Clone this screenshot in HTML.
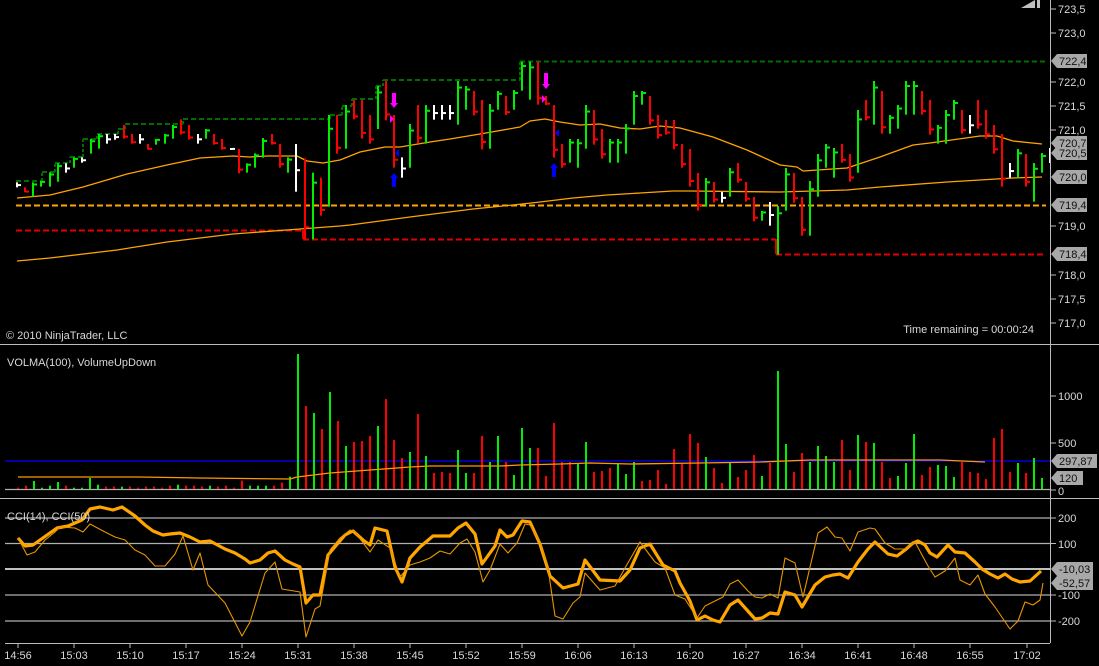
<!DOCTYPE html>
<html><head><meta charset="utf-8"><style>
html,body{margin:0;padding:0;background:#000;width:1099px;height:666px;overflow:hidden}
svg{display:block}
text{font-family:"Liberation Sans",Arial,sans-serif;font-size:11px;fill:#d8d8d8}
.bx{fill:#a8a8a8}
.bt{fill:#111}
</style></head><body>
<svg id="s" width="1099" height="666" viewBox="0 0 1099 666" xmlns="http://www.w3.org/2000/svg">
<rect width="1099" height="666" fill="#000"/>
<g id="g"></g>
<!-- frame -->
<line x1="0" y1="344.5" x2="1099" y2="344.5" stroke="#bbb"/>
<line x1="0" y1="498.5" x2="1099" y2="498.5" stroke="#bbb"/>
<line x1="1050.5" y1="0" x2="1050.5" y2="643" stroke="#bbb"/>
<line x1="5" y1="643.5" x2="1050" y2="643.5" stroke="#bbb"/>
<!-- play icon -->
<polygon points="1021,8 1035,0 1035,8" fill="#c0c0c0"/><rect x="1037" y="0" width="3" height="8" fill="#c0c0c0"/>
<!-- price axis -->
<g id="pax"></g>
<text x="1058" y="13">723,5</text><text x="1058" y="37">723,0</text>
<text x="1058" y="86">722,0</text><text x="1058" y="110">721,5</text>
<text x="1058" y="134">721,0</text><text x="1058" y="230">719,0</text>
<text x="1058" y="279">718,0</text><text x="1058" y="303">717,5</text>
<text x="1058" y="327">717,0</text>
<g id="boxes"></g>
<text x="1059" y="65" class="bt">722,4</text>
<text x="1059" y="147" class="bt">720,7</text>
<text x="1059" y="157" class="bt">720,5</text>
<text x="1059" y="181" class="bt">720,0</text>
<text x="1059" y="209" class="bt">719,4</text>
<text x="1059" y="258" class="bt">718,4</text>
<text x="6" y="339">© 2010 NinjaTrader, LLC</text>
<text x="1034" y="333" text-anchor="end">Time remaining = 00:00:24</text>
<!-- volume -->
<text x="7" y="366">VOLMA(100), VolumeUpDown</text>
<text x="1058" y="400">1000</text><text x="1058" y="447">500</text><text x="1058" y="495">0</text>
<text x="1059" y="465" class="bt">297,87</text>
<text x="1059" y="482" class="bt">120</text>
<!-- cci -->
<text x="7" y="520">CCI(14), CCI(50)</text>
<text x="1058" y="522">200</text><text x="1058" y="548">100</text>
<text x="1058" y="599">-100</text><text x="1058" y="625">-200</text>
<text x="1059" y="573" class="bt">-10,03</text>
<text x="1059" y="587" class="bt">-52,57</text>
<!-- time -->
<g text-anchor="middle">
<text x="18" y="659">14:56</text><text x="74" y="659">15:03</text><text x="130" y="659">15:10</text>
<text x="186" y="659">15:17</text><text x="242" y="659">15:24</text><text x="298" y="659">15:31</text>
<text x="354" y="659">15:38</text><text x="410" y="659">15:45</text><text x="466" y="659">15:52</text>
<text x="522" y="659">15:59</text><text x="578" y="659">16:06</text><text x="634" y="659">16:13</text>
<text x="690" y="659">16:20</text><text x="746" y="659">16:27</text><text x="802" y="659">16:34</text>
<text x="858" y="659">16:41</text><text x="914" y="659">16:48</text><text x="970" y="659">16:55</text>
<text x="1027" y="659">17:02</text>
</g>
</svg>
<script>
var NS="http://www.w3.org/2000/svg",G=document.getElementById('g');
function el(n,a,p){var e=document.createElementNS(NS,n);for(var k in a)e.setAttribute(k,a[k]);(p||G).appendChild(e);return e;}
function line(x1,y1,x2,y2,c,w,d,p){var a={x1:x1,y1:y1,x2:x2,y2:y2,stroke:c,'stroke-width':w||1};if(d)a['stroke-dasharray']=d;return el('line',a,p);}
function poly(pts,c,w){el('polyline',{points:pts.map(function(p){return p.join(',')}).join(' '),fill:'none',stroke:c,'stroke-width':w,'stroke-linejoin':'round'});}
var C={G:'#00ee00',R:'#ff0000',W:'#ffffff'};
// grid lines CCI
[518,543.5,595,621].forEach(function(y){line(5,y,1050,y,'#b0b0b0',1.2);});
line(5,569,1050,569,'#c0c0c0',2);
line(5,489.5,1050,489.5,'#b0b0b0',1.2);
// dashed levels
var gd='#006d00';
var gs=[[16,42,181],[42,55,172],[55,70,163],[70,83,157],[83,97,139],[97,118,134],[118,125,129],[125,183,124],[183,330,119],[330,342,115],[342,352,106],[352,376,99],[376,383,86],[383,520,80],[520,1046,61.5]];
gs.forEach(function(s){line(s[0],s[2],s[1],s[2],gd,2,'5,3');});
for(var i=0;i<gs.length-1;i++)line(gs[i][1],gs[i][2],gs[i][1],gs[i+1][2],gd,2,'3,2');
line(16,205.5,1046,205.5,'#ffa500',2,'6,3');
line(16,230.5,303,230.5,'#e00000',2,'6,3');line(303,230,303,239,'#e00000',2);
line(303,239.5,776,239.5,'#e00000',2,'6,3');line(776,239,776,254,'#e00000',2);
line(776,254.5,1046,254.5,'#e00000',2,'6,3');
// MAs
poly([[17,198],[50,195],[83,187],[100,182],[127,174],[167,165],[200,158],[233,156],[250,157],[267,156],[297,156],[307,161],[323,163],[340,160],[350,156],[360,152],[385,147],[400,147],[430,142],[450,139],[480,134],[520,127],[530,121],[545,119],[560,122],[580,125],[600,124],[620,128],[640,129],[660,126],[680,128],[713,137],[747,150],[780,165],[797,167],[803,171],[847,168],[880,157],[913,145],[930,143],[980,136],[997,136],[1013,141],[1042,144]],'#ffa500',1.3);
poly([[17,261],[50,258],[117,250],[167,242],[233,234],[300,229],[340,226],[350,225],[410,217],[473,209],[513,205],[540,202],[573,198],[607,195],[640,193],[673,191],[690,191],[780,192],[847,190],[880,187],[947,182],[980,180],[1013,178],[1042,177]],'#ffa500',1.3);
// price bars
var bars=[];
var z4=[['W',397,412],['R',412,427],['G',397,440],['G',393,410],['G',367,410],['G',340,395],['W',340,368],['G',322,353],['W',322,338],['G',267,311],['G',252,296],['W',252,281],['W',252,269],['R',225,266],['R',252,281],['W',252,281],['R',282,299],['G',267,284],['G',252,281],['G',225,266],['R',208,254],['R',225,269],['W',252,281],['G',237,266],['R',252,284],['R',267,299],['W',294,299],['R',297,370],['G',340,368],['G',310,353],['G',264,323],['R',252,284],['R',282,353],['G',322,368],['W',282,425],['R',325,568],['G',368,568],['R',383,497],['G',195,470],['R',195,311],['G',165,296]];
z4.forEach(function(b,i){bars.push([(50+24.675*i)/3,b[0],b[1]/3+50,b[2]/3+50]);});
var z5=[['R',150,208],['R',150,266],['R',195,281],['G',108,237],['R',93,211],['R',195,353],['W',322,383],['G',222,353],['R',165,281],['G',165,281],['W',165,209],['W',165,209],['W',165,209],['G',93,224],['G',108,179],['R',123,196],['R',150,298],['G',162,296],['G',123,179],['R',138,195],['G',120,179],['G',35,122],['G',35,149],['R',35,164],['R',138,165],['R',165,323],['R',282,353],['G',267,338],['G',267,353],['G',165,296],['R',180,284],['R',237,326],['G',267,338],['G',267,338],['G',222,311],['G',123,224],['G',123,164],['R',138,224],['R',195,266],['R',210,254],['R',210,298]];
z5.forEach(function(b,i){bars.push([340+(42+24*i)/3,b[0],b[1]/3+50,b[2]/3+50]);});
var z6=[['R',282,353],['R',297,410],['R',369,482],['G',384,470],['R',396,458],['W',426,458],['G',354,440],['R',339,398],['R',396,455],['R',441,514],['G',483,512],['W',456,527],['G',468,614],['G',354,482],['R',369,458],['R',441,557],['G',393,557],['G',312,440],['G',282,353],['G',294,383],['R',282,338],['R',312,395],['G',180,368],['R',150,211],['G',93,224],['R',123,251],['G',195,251],['G',165,236],['G',93,194],['G',93,194],['R',123,194],['R',150,254],['G',225,281],['G',180,281],['G',150,209],['R',180,251],['W',195,251],['R',150,236],['R',180,266],['R',225,311],['R',252,410],['W',339,383],['G',297,383],['R',312,410],['G',339,455],['G',309,368]];
z6.forEach(function(b,i){bars.push([680+(5+24*i)/3,b[0],b[1]/3+50,b[2]/3+50]);});
bars.forEach(function(b){var x=Math.round(b[0]),c=C[b[1]],t=b[2],bo=b[3],h=bo-t;
 el('rect',{x:x-1,y:t,width:2,height:Math.max(h,2),fill:c});
 var ty=b[1]=='G'?t+h*0.15:(b[1]=='R'?t+h*0.85:t+h*0.55);
 el('rect',{x:x+1,y:ty-1,width:3,height:2,fill:c});});
line(1050,148,1050,163,'#fff',2);
// markers
function darr(x,y1,y2,c){el('rect',{x:x-2,y:y1,width:4,height:y2-y1-4,fill:c});el('polygon',{points:(x-4)+','+(y2-5)+' '+(x+4)+','+(y2-5)+' '+x+','+y2,fill:c});}
function uarr(x,y1,y2,c){el('rect',{x:x-2,y:y1+4,width:4,height:y2-y1-4,fill:c});el('polygon',{points:(x-4)+','+(y1+5)+' '+(x+4)+','+(y1+5)+' '+x+','+y1,fill:c});}
darr(394,93,108,'#ff00ff');darr(546,73,89,'#ff00ff');
el('polygon',{points:'390,115 394,119 390,123',fill:'#ff00ff'});el('polygon',{points:'542,95 546,99 542,103',fill:'#ff00ff'});
uarr(394,173,187,'#0000ff');uarr(554,163,177,'#0000ff');
el('polygon',{points:'399,149 395,153 399,157',fill:'#0000ff'});el('polygon',{points:'559,129 555,133 559,137',fill:'#0000ff'});
// axis ticks
var P=document.getElementById('pax');
[9,33,82,106,130,226,275,299,323].forEach(function(y){line(1050,y,1056,y,'#bbb',1,null,P);});
[396,443,490,518,543.5,595,621].forEach(function(y){line(1050,y,1056,y,'#bbb',1,null,P);});
[18,74,130,186,242,298,354,410,466,522,578,634,690,746,802,858,914,970,1027].forEach(function(x){line(x,643,x,648,'#bbb',1,null,P);});
// boxes
var B=document.getElementById('boxes');
function box(y,w){el('polygon',{points:'1051,'+y+' 1057,'+(y-7)+' '+(1057+w)+','+(y-7)+' '+(1057+w)+','+(y+7)+' 1057,'+(y+7),fill:'#a8a8a8'},B);}
box(61,30);box(143,30);box(153,30);box(177,30);box(205,30);box(254,30);
box(461,40);box(478,26);box(569,36);box(583,36);
// volume
line(5,461,1050,461,'#0000ff',1.3);
var vb=[];
var z2=[[55,'R',443],[78,'R',437],[102,'G',423],[126,'G',443],[150,'G',437],[174,'G',426],[198,'R',437],[222,'G',443],[246,'G',443],[270,'G',414],[294,'G',434],[318,'R',440],[342,'R',440],[366,'G',440],[390,'R',440],[414,'R',443],[438,'R',440],[462,'R',440],[486,'R',443],[510,'R',437],[534,'G',434],[558,'R',437],[582,'R',437],[606,'R',440],[630,'G',437],[654,'R',440],[678,'R',437],[702,'R',443],[726,'R',422],[750,'G',437],[774,'G',437],[798,'G',437],[822,'R',437],[846,'R',428],[870,'G',410]];
z2.forEach(function(b){vb.push([b[0]/3,b[1],b[2]/3+340,489]);});
var z7=['G',27,'R',183,'G',204,'R',252,'G',141,'R',228,'G',303,'R',291,'R',288,'R',273,'G',243,'R',162,'R',285,'R',339,'G',321,'R',207,'G',333,'R',384,'R',381,'R',384,'G',315,'G',384,'R',384,'R',273,'G',351,'G',273,'R',351,'G',390,'G',249,'G',309,'R',309,'R',393,'R',234,'R',351,'R',351,'G',354,'G',291,'R',381,'R',378,'R',369,'G',354,'G',387,'G',351,'R',408,'R',405,'R',375];
for(var i=0;i<z7.length;i+=2)vb.push([290+(24+12*i)/3,z7[i],z7[i+1]/3+345,489]);
var z8=['R',417,'R',312,'R',357,'R',267,'R',294,'G',336,'R',369,'R',414,'G',351,'R',396,'R',375,'R',330,'G',393,'R',354,'G',78,'G',297,'R',381,'R',324,'G',351,'G',303,'G',333,'G',351,'R',285,'R',375,'G',270,'R',291,'G',294,'R',351,'R',399,'G',393,'G',354,'G',267,'R',390,'R',366,'G',360,'G',363,'G',396,'R',351,'R',381,'R',384,'R',402,'R',279,'R',252,'R',381,'G',354,'R',384,'G',339,'G',399];
for(var i=0;i<z8.length;i+=2)vb.push([660+(18+12*i)/3,z8[i],z8[i+1]/3+345,489]);
vb.forEach(function(b){el('rect',{x:Math.round(b[0])-1,y:b[2],width:2,height:b[3]-b[2],fill:C[b[1]]});});
poly([[18,477],[140,477],[200,478],[290,479],[297,477],[330,473],[370,470],[410,467],[430,466],[480,466],[500,466],[520,465],[560,464],[590,463],[630,464],[700,463],[760,462],[810,460],[940,460],[985,462]],'#ff9900',1.3);
// CCI
poly([[18,538],[25,546],[33,545],[40,540],[57,528],[68,526],[75,523],[82,520],[90,509],[100,507],[113,510],[122,507],[135,516],[145,525],[153,531],[163,535],[170,534],[180,533],[190,537],[200,542],[210,541],[225,549],[235,553],[245,559],[250,563],[260,560],[268,553],[275,551],[285,560],[293,564],[300,567],[306,603],[313,595],[320,595],[328,555],[345,535],[353,531],[363,540],[370,545],[375,528],[387,531],[395,567],[402,582],[410,558],[420,547],[433,536],[450,536],[458,528],[466,523],[475,534],[482,564],[495,546],[500,530],[507,537],[513,535],[522,521],[530,522],[540,544],[550,576],[563,588],[578,584],[585,560],[600,580],[620,581],[630,570],[640,548],[650,544],[663,565],[675,571],[680,583],[690,601],[697,620],[705,616],[713,620],[720,622],[730,605],[738,600],[755,619],[762,618],[770,613],[778,614],[785,592],[795,595],[802,607],[815,585],[825,577],[833,575],[840,574],[848,578],[858,562],[868,549],[875,542],[888,554],[897,556],[905,550],[913,543],[918,541],[925,545],[930,553],[937,557],[948,545],[955,552],[965,553],[975,562],[982,569],[990,574],[998,578],[1005,574],[1012,579],[1020,582],[1030,581],[1041,571]],'#ffa500',3.2);
poly([[18,538],[27,555],[35,552],[45,540],[55,532],[60,527],[75,528],[83,532],[90,524],[105,532],[115,537],[125,540],[135,550],[145,555],[155,566],[165,566],[175,554],[183,536],[193,570],[200,553],[208,585],[225,603],[242,636],[250,622],[265,573],[275,562],[282,589],[300,592],[306,637],[315,609],[320,606],[330,550],[340,538],[350,530],[355,532],[370,552],[378,540],[390,548],[400,577],[410,565],[420,562],[430,558],[440,551],[450,554],[460,543],[467,539],[475,552],[483,582],[490,570],[500,544],[508,553],[517,543],[525,524],[530,525],[540,542],[548,568],[555,616],[563,619],[573,603],[580,597],[585,573],[600,590],[615,586],[625,568],[640,542],[655,562],[665,568],[675,595],[685,599],[697,618],[705,606],[723,597],[730,584],[738,580],[748,591],[755,597],[762,598],[770,594],[778,598],[785,558],[795,563],[803,597],[818,533],[827,527],[835,537],[842,538],[850,551],[858,532],[870,528],[875,529],[885,543],[895,549],[905,549],[915,542],[928,566],[935,577],[945,571],[955,558],[960,580],[970,585],[978,575],[985,594],[995,607],[1010,629],[1018,621],[1025,602],[1033,605],[1040,600],[1043,583]],'#e69500',1.1);
</script>
</body></html>
